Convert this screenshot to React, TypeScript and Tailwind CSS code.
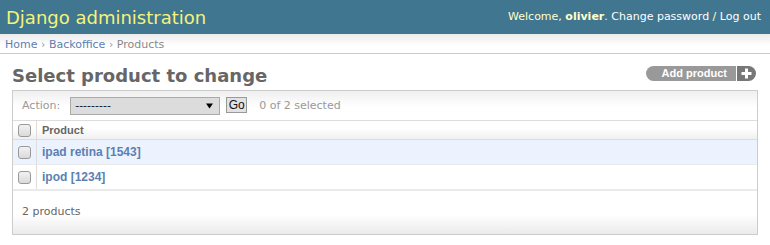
import React from "react";

function Checkbox() {
  return (
    <span className="block w-[13px] h-[13px] rounded-[3px] border border-[#999] bg-[linear-gradient(to_bottom,#f2f2f2,#dadada)]" />
  );
}

function Row({ label, bg }: { label: string; bg: string }) {
  return (
    <div className={`flex h-[25px] border-b border-[#eaeaea] ${bg}`}>
      <div className="w-[24px] border-r border-[#ddd] flex items-center pl-[5px]">
        <Checkbox />
      </div>
      <div className="flex items-center pl-[5px] font-['Liberation_Sans',Arial,sans-serif] text-[12px] font-bold text-[#5b80b2]">
        {label}
      </div>
    </div>
  );
}

export default function App() {
  return (
    <div className="w-[770px] h-[245px] bg-white overflow-hidden font-['DejaVu_Sans',sans-serif]">
      {/* Header */}
      <div className="flex justify-between items-start h-[34px] bg-[#417690]">
        <div className="pl-[6px] pt-[7px] text-[18px] leading-[21px] text-[#f4f379]">
          Django administration
        </div>
        <div className="pt-[10px] pr-[9px] text-[11px] leading-[13px] text-[#ffc]">
          Welcome, <b>olivier</b>. <span className="text-white">Change password</span> /{" "}
          <span className="text-white">Log out</span>
        </div>
      </div>

      {/* Breadcrumbs */}
      <div className="h-[20px] border-b border-[#ccc] bg-[linear-gradient(to_bottom,#ececec,#fff_60%)] pl-[5px] pt-[4px] text-[11px] leading-[13px] text-[#999]">
        <span className="text-[#5b80b2]">Home</span> › <span className="text-[#5b80b2]">Backoffice</span> ›{" "}
        <span className="text-[#888]">Products</span>
      </div>

      {/* Content */}
      <div className="px-3">
        <div className="flex justify-between items-start pt-[11px] pb-[4px]">
          <h1 className="text-[18px] leading-[21px] font-bold text-[#666]">Select product to change</h1>
          <div className="flex h-[15px] mt-[1px] mr-[2px] rounded-full overflow-hidden font-['Liberation_Sans',Arial,sans-serif] text-[11px] leading-[15px] font-bold text-white">
            <span className="bg-[#999] pl-[16px] pr-[9px]">Add product</span>
            <span className="w-px bg-white" />
            <span className="w-[19px] bg-[#777] flex items-center justify-center pr-[1px]">
              <svg width="11" height="11" viewBox="0 0 11 11">
                <rect x="4" y="0.5" width="3" height="10" fill="#fff" />
                <rect x="0.5" y="4" width="10" height="3" fill="#fff" />
              </svg>
            </span>
          </div>
        </div>

        <div className="border border-[#ccc]">
          {/* Actions */}
          <div className="flex items-start h-[30px] pt-[6px] pl-[9px] border-b border-[#ddd] bg-[linear-gradient(to_bottom,#efefef,#fff_55%)] text-[11px]">
            <span className="leading-[17px] text-[#999]">Action:</span>
            <div className="ml-[10px] w-[150px] h-[18px] border border-[#aaa] bg-[#dcdcdc] flex items-center justify-between pl-[4px] pr-[6px]">
              <span className="leading-[16px] text-[#111]">---------</span>
              <svg width="7" height="6" viewBox="0 0 7 6">
                <path d="M0 0.5 H7 L3.5 5.5 Z" fill="#000" />
              </svg>
            </div>
            <div className="ml-[6px] w-[21px] h-[16px] border border-[#999] bg-[#e2e2e2] flex items-center justify-center font-['Liberation_Sans',Arial,sans-serif] text-[12px] leading-[14px] text-[#111]">
              Go
            </div>
            <span className="ml-[12px] leading-[17px] text-[#999]">0 of 2 selected</span>
          </div>

          {/* Table header */}
          <div className="flex h-[19px] border-b border-[#ddd] bg-[linear-gradient(to_bottom,#fff_40%,#f0f0f0)]">
            <div className="w-[24px] border-r border-[#ddd] flex items-center pl-[5px]">
              <Checkbox />
            </div>
            <div className="flex items-center pl-[5px] font-['Liberation_Sans',Arial,sans-serif] text-[11px] font-bold text-[#666]">
              Product
            </div>
          </div>

          <Row label="ipad retina [1543]" bg="bg-[#edf3fe]" />
          <div className="flex h-[26px] border-b-2 border-[#eaeaea] bg-white">
            <div className="w-[24px] border-r border-[#ddd] flex items-center pl-[5px]">
              <Checkbox />
            </div>
            <div className="flex items-center pl-[5px] font-['Liberation_Sans',Arial,sans-serif] text-[12px] font-bold text-[#5b80b2]">
              ipod [1234]
            </div>
          </div>

          {/* Footer */}
          <div className="h-[43px] flex items-center pl-[9px] text-[11px] text-[#666] bg-[linear-gradient(to_bottom,#fff_55%,#ebebeb)]">
            2 products
          </div>
        </div>
      </div>
    </div>
  );
}
